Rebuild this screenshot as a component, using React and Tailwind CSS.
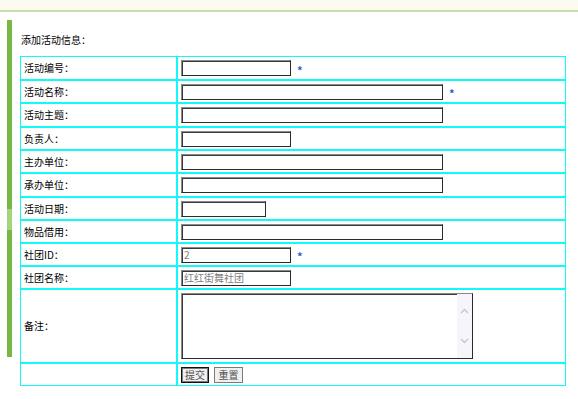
import React from "react";

const rows = [
  { label: "活动编号：", w: "w-[110px]", star: true, h: "h-[24px]" },
  { label: "活动名称：", w: "w-[262px]", star: true, h: "h-[23px]" },
  { label: "活动主题：", w: "w-[262px]", h: "h-[24px]" },
  { label: "负责人：", w: "w-[110px]", h: "h-[23px]" },
  { label: "主办单位：", w: "w-[262px]", h: "h-[23px]" },
  { label: "承办单位：", w: "w-[262px]", h: "h-[24px]" },
  { label: "活动日期：", w: "w-[85px]", h: "h-[23px]" },
  { label: "物品借用：", w: "w-[262px]", h: "h-[23px]" },
  { label: "社团ID：", w: "w-[110px]", star: true, value: "2", h: "h-[23px]" },
  { label: "社团名称：", w: "w-[110px]", value: "红红街舞社团", h: "h-[23px]" },
];

const fieldBox =
  "bg-white border border-[#2a2a2a] border-t-[#8a8a8a] border-l-[#8a8a8a] shadow-[inset_1px_1px_0_#3a3a3a]";

function Row({ h, label, children }) {
  return (
    <div className={`flex ${h}`}>
      <div className="w-[157px] border border-[#10fafa] flex items-center pl-[3px]">
        {label}
      </div>
      <div className="w-[389px] border border-[#10fafa] flex items-center pl-[3px]">
        {children}
      </div>
    </div>
  );
}

export default function App() {
  return (
    <div className="w-[578px] h-[399px] bg-white overflow-hidden text-[10px] leading-[12px] text-black font-['Noto_Sans_CJK_SC',sans-serif]">
      <div className="h-[10px] bg-[#fafaee]" />
      <div className="h-[2px] bg-[#c6e0ac]" />
      <div className="flex pt-[8px]">
        <div className="ml-[7px] w-[5px] h-[337px] flex flex-col">
          <div className="h-[189px] bg-[#78b646]" />
          <div className="h-[21px] bg-[#a6d47a]" />
          <div className="flex-1 bg-[#78b646]" />
        </div>
        <div className="ml-[8px]">
          <div className="h-[36px] pt-[14px] pl-[1px]">添加活动信息：</div>
          <div className="flex flex-col">
            {rows.map((r) => (
              <Row key={r.label} h={r.h} label={r.label}>
                <div
                  className={`${r.w} h-[16px] ${fieldBox} flex items-center pl-[2px] text-[#808080]`}
                >
                  {r.value}
                </div>
                {r.star && (
                  <span className="ml-[6px] mt-[3px] text-[#2f5fc8] text-[11px] font-bold">*</span>
                )}
              </Row>
            ))}
            <Row h="h-[74px]" label="备注：">
              <div className={`relative w-[292px] h-[66px] ${fieldBox}`}>
                <div className="absolute right-0 top-0 bottom-0 w-[15px] bg-[#f8f4fb] flex flex-col items-center justify-between py-[14px]">
                  <svg width="9" height="6" viewBox="0 0 9 6">
                    <path d="M1 5 L4.5 1.5 L8 5" fill="none" stroke="#c4c4c4" strokeWidth="1.3" />
                  </svg>
                  <svg width="9" height="6" viewBox="0 0 9 6">
                    <path d="M1 1 L4.5 4.5 L8 1" fill="none" stroke="#c4c4c4" strokeWidth="1.3" />
                  </svg>
                </div>
              </div>
            </Row>
            <Row h="h-[23px]" label="">
              <div className="w-[28px] h-[16px] bg-[#efefef] border border-[#111] shadow-[inset_0_0_0_1px_#7a7a7a] flex items-center justify-center text-[#555]">
                提交
              </div>
              <div className="ml-[5px] w-[29px] h-[16px] bg-[#f0f0f0] border border-[#7a7a7a] flex items-center justify-center text-[#555]">
                重置
              </div>
            </Row>
          </div>
        </div>
      </div>
    </div>
  );
}
